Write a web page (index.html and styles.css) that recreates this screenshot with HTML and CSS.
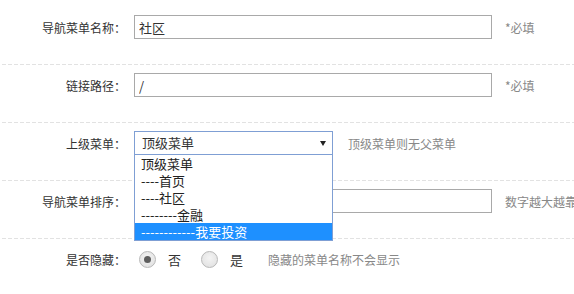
FILE: index.html
```html
<!DOCTYPE html>
<html lang="zh-CN">
<head>
    <meta charset="UTF-8">
    <meta name="viewport" content="width=device-width, initial-scale=1.0">
    <title>编辑导航菜单</title>
    <link rel="stylesheet" href="styles.css">
</head>
<body>
    <form class="menu-form">
        <div class="form-row first">
            <label class="form-label">导航菜单名称：</label>
            <input class="text-input" type="text" value="社区">
            <span class="hint">*必填</span>
        </div>
        <div class="form-row">
            <label class="form-label">链接路径：</label>
            <input class="text-input" type="text" value="/">
            <span class="hint">*必填</span>
        </div>
        <div class="form-row">
            <label class="form-label">上级菜单：</label>
            <div class="select-wrap">
                <div class="select-box">顶级菜单<span class="arrow"></span></div>
                <ul class="select-list">
                    <li>顶级菜单</li>
                    <li>----首页</li>
                    <li>----社区</li>
                    <li>--------金融</li>
                    <li class="active">------------我要投资</li>
                </ul>
            </div>
            <span class="hint wide">顶级菜单则无父菜单</span>
        </div>
        <div class="form-row">
            <label class="form-label">导航菜单排序：</label>
            <input class="text-input" type="text" value="">
            <span class="hint">数字越大越靠前</span>
        </div>
        <div class="form-row">
            <label class="form-label">是否隐藏：</label>
            <div class="radio-group">
                <span class="radio checked"></span>
                <span class="radio-text">否</span>
                <span class="radio"></span>
                <span class="radio-text">是</span>
            </div>
            <span class="hint radio-hint">隐藏的菜单名称不会显示</span>
        </div>
    </form>
</body>
</html>
```

FILE: styles.css
```css
body {
    margin: 0;
    background: #fff;
    color: #333;
    font-family: "Noto Sans CJK SC", "DejaVu Sans", sans-serif;
    font-size: 12px;
    overflow: hidden;
}

.menu-form {
    width: 574px;
}

.form-row {
    display: flex;
    align-items: center;
    height: 24px;
    padding: 9px 0 25px;
    white-space: nowrap;
    background-image: repeating-linear-gradient(to right, transparent 0 2px, #e2e2e2 2px 6px);
    background-size: 100% 1px;
    background-repeat: no-repeat;
}

.form-row > * {
    flex-shrink: 0;
}

.form-row.first {
    padding-top: 15px;
    background: none;
}

.form-label {
    width: 126px;
    margin-right: 8px;
    text-align: right;
    color: #333;
}

.text-input {
    box-sizing: border-box;
    width: 358px;
    height: 24px;
    margin: 0;
    padding: 0 4px;
    border: 1px solid #a9a9a9;
    font-family: inherit;
    font-size: 13px;
    color: #333;
    outline: none;
}

.hint {
    margin-left: 13px;
    color: #888;
}

.hint.wide {
    margin-left: 15px;
}

.select-wrap {
    position: relative;
    width: 199px;
    height: 24px;
}

.select-box {
    box-sizing: border-box;
    height: 24px;
    padding: 0 7px;
    border: 1px solid #7f9fd4;
    line-height: 22px;
    font-size: 13px;
    position: relative;
}

.arrow {
    position: absolute;
    right: 6px;
    top: 9px;
    border-left: 3px solid transparent;
    border-right: 3px solid transparent;
    border-top: 5px solid #222;
}

.select-list {
    position: absolute;
    left: 0;
    top: 24px;
    box-sizing: border-box;
    width: 199px;
    margin: 0;
    padding: 0;
    list-style: none;
    background: #fff;
    border: 1px solid #7f9fd4;
    border-top: none;
    z-index: 2;
}

.select-list li {
    height: 17px;
    padding-left: 6px;
    line-height: 17px;
    font-size: 13px;
    color: #222;
}

.select-list li.active {
    background: #1e90ff;
    color: #fff;
}

.radio-group {
    display: flex;
    align-items: center;
    margin-left: 5px;
}

.radio {
    box-sizing: border-box;
    width: 17px;
    height: 17px;
    border: 1px solid #b8b8b8;
    border-radius: 50%;
    background: radial-gradient(circle at 50% 40%, #f4f4f4 0, #dedede 100%);
    position: relative;
}

.radio.checked::after {
    content: "";
    position: absolute;
    left: 4px;
    top: 4px;
    width: 7px;
    height: 7px;
    border-radius: 50%;
    background: #5e5e5e;
}

.radio-text {
    margin: 0 20px 0 12px;
    color: #333;
    font-size: 13px;
}

.radio-hint {
    margin-left: 5px;
}
```
